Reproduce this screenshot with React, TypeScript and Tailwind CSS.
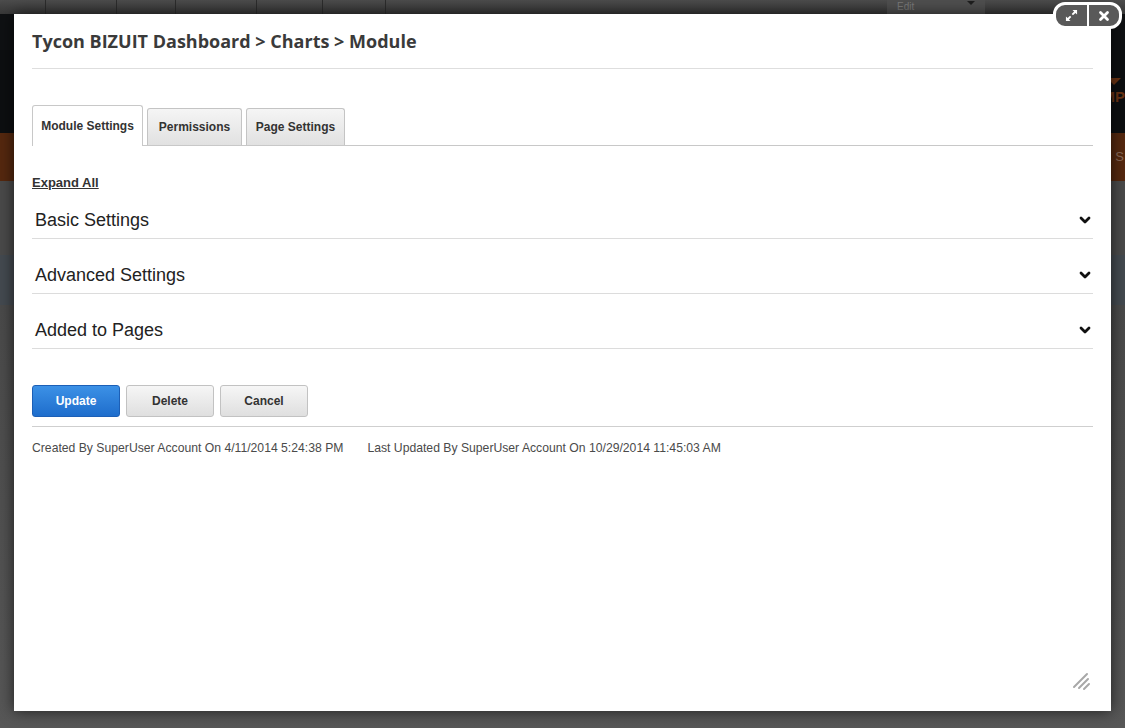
import { ChevronDown } from "lucide-react";

const sections = ["Basic Settings", "Advanced Settings", "Added to Pages"];

function TopBar() {
  const seps = [46, 71, 59, 81, 66, 63];
  return (
    <div className="flex h-[14px] bg-gradient-to-b from-[#4c4c4c] to-[#383838]">
      {seps.map((w, i) => (
        <div key={i} className="h-full border-r border-[#2c2c2c]" style={{ width: w }} />
      ))}
      <div className="flex-1" />
      <div className="relative mr-[140px] flex h-full w-[98px] items-start justify-between bg-[#4f4f4f] px-[10px]">
        <span className="mt-[1px] text-[10px] leading-[11px] text-[#7a7a7a]">Edit</span>
        <span className="mt-[1px] h-0 w-0 border-x-4 border-t-4 border-x-transparent border-t-[#1e1e1e]" />
      </div>
    </div>
  );
}

function Backdrop() {
  return (
    <div className="flex h-[728px] w-[1125px] flex-col bg-[#4d4d4d] font-['Liberation_Sans',Arial,sans-serif]">
      <TopBar />
      <div className="h-[36px] bg-[#0f1113]" />
      <div className="flex h-[83px] justify-end bg-[#0d0f11]">
        <div className="flex flex-col items-end pt-[28px]">
          <span className="mr-[4px] h-0 w-0 border-x-[7px] border-t-[7px] border-x-transparent border-t-[#6b3313]" />
          <span className="mt-[4px] text-[15px] font-bold leading-none text-[#6b3313]">MP</span>
        </div>
      </div>
      <div className="flex h-[48px] items-center justify-end bg-[#55280f] pr-[1px]">
        <span className="text-[13px] text-[#8a6a5a]">S</span>
      </div>
      <div className="h-[74px] bg-[#4a4a4a]" />
      <div className="h-[50px] bg-[#444a50]" />
      <div className="flex-1 bg-gradient-to-b from-[#4a4a4a] to-[#575757]" />
    </div>
  );
}

function Tabs() {
  return (
    <div className="mt-[36px] flex h-[41px] items-end gap-[4px] border-b border-[#c8c8c8] font-['Liberation_Sans',Arial,sans-serif] text-[12px] font-bold text-[#333]">
      <div className="-mb-px flex h-[41px] w-[111px] items-center justify-center rounded-t-[3px] border border-b-0 border-[#c8c8c8] bg-white">
        Module Settings
      </div>
      <div className="flex h-[37px] w-[95px] items-center justify-center rounded-t-[3px] border border-b-0 border-[#c4c4c4] bg-gradient-to-b from-[#f5f5f5] to-[#e1e1e1]">
        Permissions
      </div>
      <div className="flex h-[37px] w-[99px] items-center justify-center rounded-t-[3px] border border-b-0 border-[#c4c4c4] bg-gradient-to-b from-[#f5f5f5] to-[#e1e1e1]">
        Page Settings
      </div>
    </div>
  );
}

function WindowControls() {
  return (
    <div className="absolute -top-[12px] left-[1039px] flex h-[27px] w-[69px] overflow-hidden rounded-[12px] border-[3px] border-white bg-[#595959]">
      <div className="flex w-[33px] items-center justify-center border-r-2 border-white">
        <svg width="13" height="13" viewBox="0 0 14 14" fill="#fff">
          <path d="M8 1h5v5l-1.8-1.8-2.6 2.6-1.4-1.4 2.6-2.6z" />
          <path d="M6 13H1V8l1.8 1.8 2.6-2.6 1.4 1.4-2.6 2.6z" />
        </svg>
      </div>
      <div className="flex flex-1 items-center justify-center">
        <svg width="12" height="12" viewBox="0 0 12 12" stroke="#fff" strokeWidth="2.8" strokeLinecap="round">
          <path d="M2.5 2.5l7 7M9.5 2.5l-7 7" />
        </svg>
      </div>
    </div>
  );
}

function Modal() {
  return (
    <div className="absolute left-[14px] top-[14px] flex h-[697px] w-[1097px] flex-col bg-white px-[18px] shadow-[0_0_14px_rgba(0,0,0,0.65)]">
      <WindowControls />
      <div className="flex h-[55px] items-center border-b border-[#dedede] pt-[1px]">
        <h1 className="font-['Open_Sans',sans-serif] text-[18px] font-bold text-[#3a3a3a]">
          Tycon BIZUIT Dashboard &gt; Charts &gt; Module
        </h1>
      </div>
      <Tabs />
      <div className="font-['Liberation_Sans',Arial,sans-serif]">
        <a className="mt-[29px] block h-[16px] text-[13px] font-bold leading-[16px] text-[#333] underline">Expand All</a>
        {sections.map((s, i) => (
          <div
            key={s}
            className={`flex items-center justify-between border-b border-[#dcdcdc] pb-[8px] pl-[3px] pr-0 ${i === 0 ? "pt-[19px]" : "pt-[26px]"}`}
          >
            <span className="text-[18px] leading-[20px] text-[#222]">{s}</span>
            <ChevronDown size={16} strokeWidth={4.2} color="#111" />
          </div>
        ))}
        <div className="mt-[36px] flex gap-[6px] text-[12px] font-bold">
          <button className="h-[32px] w-[88px] rounded-[3px] border border-[#1c5fb6] bg-gradient-to-b from-[#3c91e6] to-[#1e6dcc] text-white">
            Update
          </button>
          <button className="h-[32px] w-[88px] rounded-[3px] border border-[#c2c2c2] bg-gradient-to-b from-[#f6f6f6] to-[#dfdfdf] text-[#333]">
            Delete
          </button>
          <button className="h-[32px] w-[88px] rounded-[3px] border border-[#c2c2c2] bg-gradient-to-b from-[#f6f6f6] to-[#dfdfdf] text-[#333]">
            Cancel
          </button>
        </div>
        <div className="mt-[9px] border-t border-[#cfcfcf]" />
        <div className="mt-[14px] flex gap-[24px] text-[12.2px] leading-[14px] text-[#4a4a4a]">
          <span>Created By SuperUser Account On 4/11/2014 5:24:38 PM</span>
          <span>Last Updated By SuperUser Account On 10/29/2014 11:45:03 AM</span>
        </div>
      </div>
      <div className="flex-1" />
      <div className="flex justify-end pb-[20px] pr-[1px]">
        <svg width="20" height="20" viewBox="0 0 20 20" stroke="#a8a8a8" strokeWidth="2" strokeLinecap="round">
          <path d="M2 16L15 3M7 17L16 8M12 18L17 13" />
        </svg>
      </div>
    </div>
  );
}

export default function App() {
  return (
    <div className="relative h-[728px] w-[1125px] overflow-hidden">
      <Backdrop />
      <Modal />
    </div>
  );
}
